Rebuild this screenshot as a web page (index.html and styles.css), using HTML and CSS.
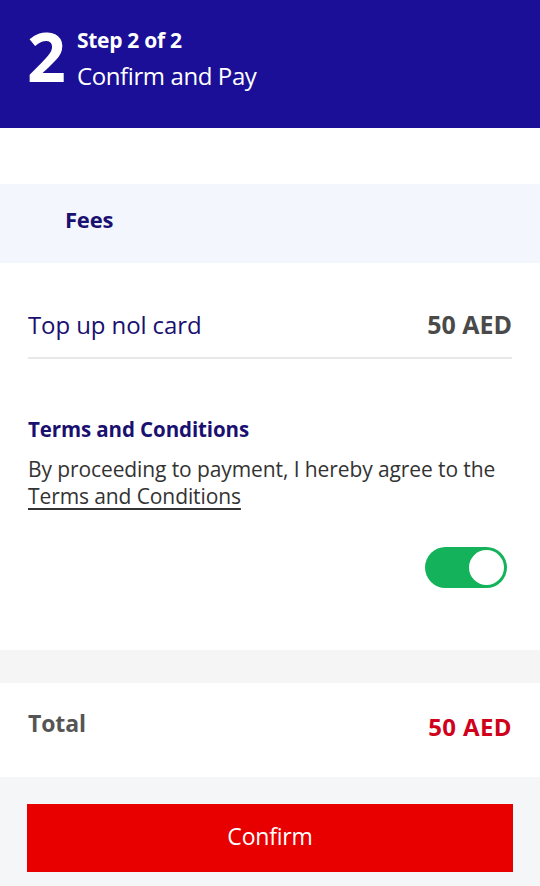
FILE: index.html
```html
<!DOCTYPE html>
<html>
<head>
<meta charset="utf-8">
<link rel="stylesheet" href="styles.css">
</head>
<body>
<div class="page">
  <header class="header">
    <div class="step-num">2</div>
    <div class="step-text">
      <div class="step-label">Step 2 of 2</div>
      <div class="step-title">Confirm and Pay</div>
    </div>
  </header>
  <div class="spacer"></div>
  <div class="fees-band"><span class="fees-title">Fees</span></div>
  <section class="details">
    <div class="fee-row">
      <span class="fee-name">Top up nol card</span>
      <span class="fee-amount">50 AED</span>
    </div>
    <h3 class="terms-title">Terms and Conditions</h3>
    <p class="terms-text">By proceeding to payment, I hereby agree to the <span class="terms-link">Terms and Conditions</span></p>
    <div class="toggle-row">
      <div class="toggle"><div class="knob"></div></div>
    </div>
  </section>
  <div class="gap-band"></div>
  <div class="total-row">
    <span class="total-label">Total</span>
    <span class="total-amount">50 AED</span>
  </div>
  <div class="footer">
    <button class="confirm-btn">Confirm</button>
  </div>
</div>
</body>
</html>
```
FILE: styles.css
```css
* { box-sizing: border-box; }
html, body { margin: 0; padding: 0; }
body {
  font-family: "Open Sans", "Noto Sans", sans-serif;
  background: #f5f5f5;
  width: 540px;
  height: 886px;
  overflow: hidden;
}
.page { display: flex; flex-direction: column; height: 886px; }
.header {
  background: #1a0f96;
  height: 128px;
  display: flex;
  align-items: flex-start;
  padding: 18px 0 0 27px;
  color: #fff;
}
.step-num {
  font-size: 68px;
  font-weight: 700;
  line-height: 76px;
  width: 50px;
}
.step-text { display: flex; flex-direction: column; padding-top: 8px; }
.step-label { font-size: 21px; font-weight: 700; line-height: 28px; letter-spacing: -0.3px; }
.step-title { font-size: 24px; line-height: 38px; letter-spacing: -0.4px; margin-top: 3px; }
.spacer { height: 56px; background: #fff; }
.fees-band {
  height: 79px;
  background: #f3f6fc;
  display: flex;
  align-items: center;
  padding: 0 0 10px 65px;
}
.fees-title { font-size: 22px; font-weight: 700; color: #1a1070; letter-spacing: -0.2px; }
.details { background: #fff; padding: 0 28px; height: 387px; }
.fee-row {
  display: flex;
  justify-content: space-between;
  align-items: center;
  height: 96px;
  padding-top: 28px;
  border-bottom: 2px solid #e8e8e8;
}
.fee-name { font-size: 24px; color: #1a1070; letter-spacing: -0.1px; }
.fee-amount { font-size: 25px; font-weight: 700; color: #4a4a4a; letter-spacing: 0; }
.terms-title {
  margin: 56px 0 0;
  font-size: 20.5px;
  font-weight: 700;
  color: #1a1070;
  line-height: 28px;
  letter-spacing: -0.1px;
}
.terms-text {
  margin: 13px 0 0;
  font-size: 21px;
  line-height: 27px;
  color: #333;
  letter-spacing: -0.1px;
}
.terms-link { text-decoration: underline; text-underline-offset: 4px; white-space: nowrap; }
.toggle-row { display: flex; justify-content: flex-end; padding: 37px 5px 0 0; }
.toggle {
  width: 82px;
  height: 41px;
  border-radius: 21px;
  background: #14b25a;
  display: flex;
  justify-content: flex-end;
  align-items: center;
  padding: 3px;
}
.knob { width: 35px; height: 35px; border-radius: 50%; background: #fff; }
.gap-band { height: 33px; background: #f5f5f5; }
.total-row {
  background: #fff;
  height: 94px;
  display: flex;
  justify-content: space-between;
  align-items: center;
  padding: 0 28px;
}
.total-label { font-size: 23px; font-weight: 700; color: #555; margin-top: -14px; letter-spacing: -0.1px; }
.total-amount { font-size: 24px; font-weight: 700; color: #d0021b; margin-top: -8px; letter-spacing: 0.4px; }
.footer { flex: 1; background: #f5f6f7; padding: 27px 27px 0; }
.confirm-btn {
  width: 100%;
  height: 68px;
  border: none;
  background: #e80000;
  color: #fff;
  font-family: inherit;
  font-size: 23px;
  letter-spacing: -0.2px;
  padding: 0 0 4px;
}
```
